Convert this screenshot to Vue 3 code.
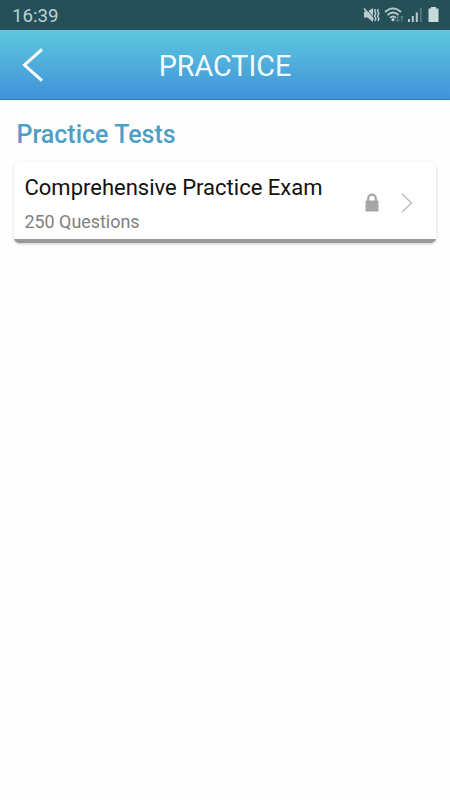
<template>
  <div class="screen">
    <div class="status-bar">
      <span class="clock">{{ time }}</span>
      <svg class="status-icons" width="76" height="18" viewBox="0 0 76 18" fill="none">
        <!-- muted / vibrate -->
        <path d="M1 5.500h3.500L10 2v14l-5.500-4.500H1z" fill="#b9cdd1" />
        <path d="M2.200 2L12 13" stroke="#265057" stroke-width="1" />
        <path d="M1 2.500L10.500 13.500" stroke="#b9cdd1" stroke-width="1.500" />
        <path d="M12.300 3l-.7 2 1.200 2.500-1.200 2.500 1.200 2.500-.7 2.500M15.300 3l-.7 2 1.200 2.500-1.200 2.500 1.200 2.500-.7 2.500" stroke="#b9cdd1" stroke-width="1.500" />
        <!-- wifi -->
        <path d="M22 6Q30 -1.300 38 6M24.500 9Q30 4 35.500 9M27 11.800Q30 9 33 11.800" stroke="#b9cdd1" stroke-width="1.700" />
        <circle cx="30" cy="13.700" r="1.600" fill="#b9cdd1" />
        <path d="M34.800 10v5.500M33 13.700l1.800 1.800 1.800-1.800M38.800 15.500v-5.500M37 11.800l1.800-1.800 1.800 1.800" stroke="#668b91" stroke-width="1" />
        <!-- signal -->
        <path d="M46 13v3M49.800 10v6M53.800 6.500v9.500" stroke="#b9cdd1" stroke-width="2" />
        <path d="M57.800 2v14" stroke="#54787e" stroke-width="1.800" />
        <!-- battery -->
        <path d="M68 1h5v1.500h2.500v13.500h-10v-13.500H68z" fill="#c9dadd" />
      </svg>
    </div>

    <header class="nav-bar">
      <button class="back" aria-label="Back">
        <svg width="24" height="36" viewBox="0 0 24 36" fill="none">
          <path d="M22 2.300L4.500 18L22 33.700" stroke="#fff" stroke-width="3" />
        </svg>
      </button>
      <h1>PRACTICE</h1>
    </header>

    <main>
      <h2>Practice Tests</h2>
      <div v-for="test in tests" :key="test.name" class="card">
        <div class="card-text">
          <div class="name">{{ test.name }}</div>
          <div class="count">{{ test.questions }} Questions</div>
        </div>
        <svg v-if="test.locked" class="lock" width="14" height="19" viewBox="0 0 14 19" fill="none">
          <path d="M3.200 8V5.500a3.800 3.800 0 0 1 7.600 0v2.500" stroke="#a6a6a6" stroke-width="2.200" />
          <rect x=".5" y="7.500" width="13" height="11" rx=".6" fill="#a6a6a6" />
        </svg>
        <svg class="arrow" width="12" height="20" viewBox="0 0 12 20" fill="none">
          <path d="M1 .8L10.500 10L1 19.200" stroke="#bcbcbc" stroke-width="1.400" />
        </svg>
      </div>
    </main>
  </div>
</template>

<script setup>
import { ref } from 'vue'

const time = ref('16:39')

const tests = ref([
  { name: 'Comprehensive Practice Exam', questions: 250, locked: true }
])
</script>

<style>
body {
  margin: 0;
  background: #fefefe;
}
</style>

<style scoped>
.screen {
  min-height: 800px;
  font-family: Roboto, "Liberation Sans", sans-serif;
  background: #fefefe;
}

.status-bar {
  display: flex;
  align-items: center;
  justify-content: space-between;
  box-sizing: border-box;
  height: 30px;
  padding: 0 11px 0 12px;
  background: #265057;
}

.clock {
  padding-top: 2px;
  font-size: 18.7px;
  line-height: 28px;
  color: #bdd0d4;
}

.nav-bar {
  display: grid;
  grid-template-columns: 60px 1fr 60px;
  align-items: center;
  box-sizing: border-box;
  height: 70px;
  border-bottom: 1px solid #2f7fc9;
  background: linear-gradient(#5cc8dd, #4292da);
}

.back {
  display: flex;
  margin: 0;
  padding: 0 0 0 20px;
  border: 0;
  background: none;
}

h1 {
  margin: 3px 0 0;
  font-size: 28.7px;
  font-weight: 400;
  line-height: 34px;
  text-align: center;
  color: #f2fcff;
}

main {
  padding: 19px 14px 0;
}

h2 {
  margin: 0 0 11px 2.5px;
  font-size: 25px;
  font-weight: 500;
  line-height: 32px;
  color: #4d9fc5;
}

.card {
  display: flex;
  align-items: center;
  box-sizing: border-box;
  height: 81px;
  padding: 4px 23px 4px 10.5px;
  border-radius: 5px;
  background: linear-gradient(#fff 77.5px, #999 77.5px);
  box-shadow: 0 1px 3px rgba(0, 0, 0, 0.2);
}

.card-text {
  flex: 1;
  padding-top: 2px;
}

.name {
  font-size: 22px;
  line-height: 28px;
  color: #111;
}

.count {
  margin-top: 8px;
  font-size: 17.9px;
  line-height: 24px;
  color: #808080;
}

.lock {
  margin-right: 22px;
}
</style>
